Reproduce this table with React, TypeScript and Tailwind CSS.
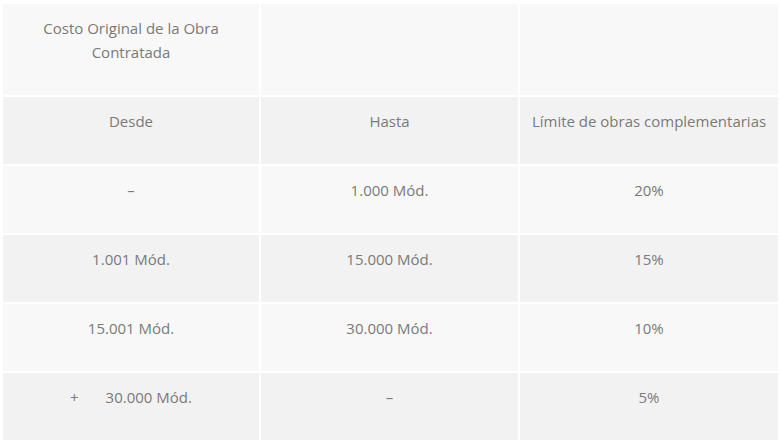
const rows: { cells: React.ReactNode[]; shade: boolean }[] = [
  { cells: ['Desde', 'Hasta', 'Límite de obras complementarias'], shade: true },
  { cells: ['–', '1.000 Mód.', '20%'], shade: false },
  { cells: ['1.001 Mód.', '15.000 Mód.', '15%'], shade: true },
  { cells: ['15.001 Mód.', '30.000 Mód.', '10%'], shade: false },
  {
    cells: [
      <span key="plus">
        +<span className="inline-block w-[27px]" />30.000 Mód.
      </span>,
      '–',
      '5%',
    ],
    shade: true,
  },
];

function Cell({ children, shade }: { children?: React.ReactNode; shade: boolean }) {
  return (
    <div
      className={`text-center pt-3 pb-[31px] px-2 leading-6 ${shade ? 'bg-[#f2f2f2]' : 'bg-[#f8f8f8]'}`}
    >
      {children}
    </div>
  );
}

export default function App() {
  return (
    <div
      className="w-[780px] h-[444px] bg-white pt-1 pl-[3px] pr-[2px] text-[15px] text-[#7a7a7a]"
      style={{ fontFamily: '"Open Sans", sans-serif' }}
    >
      <div className="grid grid-cols-[256px_257px_258px] gap-[2px]">
        <Cell shade={false}>
          <div className="px-5">Costo Original de la Obra Contratada</div>
        </Cell>
        <Cell shade={false} />
        <Cell shade={false} />
        {rows.map((row, i) =>
          row.cells.map((c, j) => (
            <Cell key={`${i}-${j}`} shade={row.shade}>
              {c}
            </Cell>
          )),
        )}
      </div>
    </div>
  );
}
